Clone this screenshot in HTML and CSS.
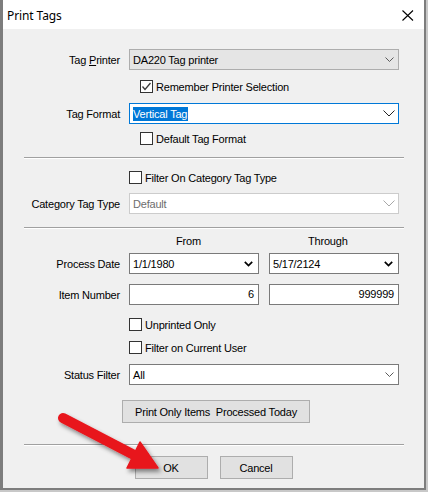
FILE: index.html
```html
<!DOCTYPE html>
<html>
<head>
<meta charset="utf-8">
<link rel="stylesheet" href="styles.css">
</head>
<body>
<div class="screen">
  <div class="window">
    <div class="titlebar">
      <span class="title">Print Tags</span>
      <svg class="close" width="12" height="11" viewBox="0 0 12 11"><path d="M0.5 0.5 L11 10.5 M11 0.5 L0.5 10.5" stroke="#000" stroke-width="1.1" fill="none"/></svg>
    </div>
    <div class="client">
      <div class="row mt20">
        <label class="lbl">Tag <u>P</u>rinter</label>
        <div class="combo ro">
          <span>DA220 Tag printer</span>
          <svg class="chev-s" width="9" height="5" viewBox="0 0 9 5"><polyline points="0.5,0.5 4.5,4.5 8.5,0.5" fill="none" stroke="#5a5a5a" stroke-width="1"/></svg>
        </div>
      </div>
      <div class="row check mt10 indent">
        <span class="cb"><svg width="11" height="11" viewBox="0 0 11 11"><polyline points="1.5,5.5 4,8.5 9.5,2" fill="none" stroke="#3a3a3a" stroke-width="1.3"/></svg></span>
        <span>Remember Printer Selection</span>
      </div>
      <div class="row mt10">
        <label class="lbl">Tag Format</label>
        <div class="combo focus">
          <span class="sel">Vertical Tag</span>
          <svg class="chev-l" width="12" height="7" viewBox="0 0 12 7"><polyline points="0.5,0.5 6,6 11.5,0.5" fill="none" stroke="#222" stroke-width="1"/></svg>
        </div>
      </div>
      <div class="row check mt8 indent">
        <span class="cb"></span>
        <span>Default Tag Format</span>
      </div>
      <div class="sep mt12"></div>
      <div class="row check mt12">
        <span class="cb"></span>
        <span>Filter On Category Tag Type</span>
      </div>
      <div class="row mt9">
        <label class="lbl">Category Tag Type</label>
        <div class="combo dis">
          <span>Default</span>
          <svg class="chev-l" width="12" height="7" viewBox="0 0 12 7"><polyline points="0.5,0.5 6,6 11.5,0.5" fill="none" stroke="#a8a8a8" stroke-width="1"/></svg>
        </div>
      </div>
      <div class="sep mt13"></div>
      <div class="heads mt5">
        <span class="h-from">From</span>
        <span class="h-thru">Through</span>
      </div>
      <div class="row mt5">
        <label class="lbl">Process Date</label>
        <div class="pair">
          <div class="combo half">
            <span>1/1/1980</span>
            <svg class="chev-b" width="9" height="6" viewBox="0 0 9 6"><polyline points="0.8,0.8 4.5,4.6 8.2,0.8" fill="none" stroke="#000" stroke-width="1.7"/></svg>
          </div>
          <div class="combo half">
            <span>5/17/2124</span>
            <svg class="chev-b" width="9" height="6" viewBox="0 0 9 6"><polyline points="0.8,0.8 4.5,4.6 8.2,0.8" fill="none" stroke="#000" stroke-width="1.7"/></svg>
          </div>
        </div>
      </div>
      <div class="row mt10">
        <label class="lbl">Item Number</label>
        <div class="pair">
          <div class="field">6</div>
          <div class="field">999999</div>
        </div>
      </div>
      <div class="row check mt13">
        <span class="cb"></span>
        <span>Unprinted Only</span>
      </div>
      <div class="row check mt10">
        <span class="cb"></span>
        <span>Filter on Current User</span>
      </div>
      <div class="row mt10">
        <label class="lbl">Status Filter</label>
        <div class="combo">
          <span>All</span>
          <svg class="chev-s" width="9" height="5" viewBox="0 0 9 5"><polyline points="0.5,0.5 4.5,4.5 8.5,0.5" fill="none" stroke="#5a5a5a" stroke-width="1"/></svg>
        </div>
      </div>
      <div class="btnrow mt15">
        <button class="btn today">Print Only Items&nbsp; Processed Today</button>
      </div>
      <div class="sep mt21"></div>
      <div class="btnrow actions mt10">
        <button class="btn act">OK</button>
        <button class="btn act">Cancel</button>
      </div>
    </div>
  </div>
  <svg class="redarrow" width="428" height="492" viewBox="0 0 428 492">
    <defs>
      <filter id="sh" x="-20%" y="-20%" width="140%" height="140%">
        <feDropShadow dx="2" dy="3" stdDeviation="2" flood-color="#000" flood-opacity="0.45"/>
      </filter>
    </defs>
    <g filter="url(#sh)" fill="#e8141b" stroke="#e8141b">
      <line x1="63" y1="418" x2="136" y2="456" stroke-width="10" stroke-linecap="round"/>
      <polygon points="158,468 140,442 127,468" stroke-width="1.5" stroke-linejoin="round"/>
    </g>
  </svg>
</div>
</body>
</html>
```

FILE: styles.css
```css
html, body {
  margin: 0;
  padding: 0;
}
body {
  background: #c8c8c8;
  font-family: "Liberation Sans", Arial, sans-serif;
  font-size: 11px;
  letter-spacing: -0.2px;
  color: #000;
}
.screen {
  position: relative;
  width: 428px;
  height: 492px;
  overflow: hidden;
  background: #c8c8c8;
}
.window {
  width: 421px;
  height: 488px;
  border-style: solid;
  border-color: #7d7d7d;
  border-width: 0 2px 2px 3px;
  background: #f0f0f0;
  display: flex;
  flex-direction: column;
}
.titlebar {
  height: 29px;
  background: #fff;
  display: flex;
  align-items: center;
  justify-content: space-between;
  padding: 0 10px 0 4px;
  flex: none;
}
.title {
  font-family: "Noto Sans", "Liberation Sans", sans-serif;
  font-size: 12px;
  letter-spacing: -0.1px;
  color: #000;
  margin-top: 1px;
}
.close {
  margin-top: 1px;
}
.client {
  display: flex;
  flex-direction: column;
}
.row {
  display: flex;
  align-items: center;
  height: 21px;
  flex: none;
}
.row.check {
  height: 13px;
  padding-left: 126px;
}
.row.check.indent {
  padding-left: 137px;
}
.lbl {
  width: 126px;
  padding-right: 9px;
  box-sizing: border-box;
  text-align: right;
  white-space: nowrap;
}
.cb {
  width: 13px;
  height: 13px;
  box-sizing: border-box;
  border: 1px solid #333;
  background: #fff;
  margin-right: 3px;
  display: flex;
  align-items: center;
  justify-content: center;
}
.combo {
  width: 270px;
  height: 21px;
  box-sizing: border-box;
  border: 1px solid #7a7a7a;
  background: #fff;
  display: flex;
  align-items: center;
  justify-content: space-between;
  padding: 0 4px 0 3px;
}
.combo.ro {
  background: #e5e5e5;
  border-color: #adadad;
}
.combo.focus {
  border-color: #0078d7;
  padding-right: 3px;
}
.combo.dis {
  border-color: #cccccc;
  color: #6d6d6d;
  padding-right: 3px;
}
.sel {
  background: #0078d7;
  color: #fff;
  line-height: 14px;
  padding-right: 1px;
}
.pair {
  display: flex;
  gap: 10px;
}
.combo.half {
  width: 130px;
  padding-right: 5px;
}
.field {
  width: 130px;
  height: 21px;
  box-sizing: border-box;
  border: 1px solid #7a7a7a;
  background: #fff;
  text-align: right;
  padding: 0 4px;
  line-height: 19px;
}
.sep {
  margin-left: 21px;
  width: 380px;
  height: 0;
  border-top: 1px solid #a0a0a0;
  border-bottom: 1px solid #fff;
  flex: none;
}
.heads {
  height: 14px;
  display: flex;
  align-items: center;
  padding-left: 173px;
  flex: none;
}
.h-from {
  width: 132px;
}
.btnrow {
  display: flex;
  flex: none;
}
.actions {
  justify-content: center;
  gap: 12px;
}
.btn {
  font-family: "Liberation Sans", Arial, sans-serif;
  font-size: 11px;
  letter-spacing: -0.2px;
  height: 23px;
  box-sizing: border-box;
  border: 1px solid #adadad;
  background: #e1e1e1;
  color: #000;
  padding: 0;
  margin: 0;
}
.today {
  width: 188px;
  margin-left: 119px;
}
.act {
  width: 73px;
}
.mt5 { margin-top: 5px; }
.mt8 { margin-top: 8px; }
.mt9 { margin-top: 9px; }
.mt10 { margin-top: 10px; }
.mt12 { margin-top: 12px; }
.mt13 { margin-top: 13px; }
.mt15 { margin-top: 15px; }
.mt20 { margin-top: 20px; }
.mt21 { margin-top: 21px; }
.redarrow {
  position: absolute;
  left: 0;
  top: 0;
  pointer-events: none;
}
```
